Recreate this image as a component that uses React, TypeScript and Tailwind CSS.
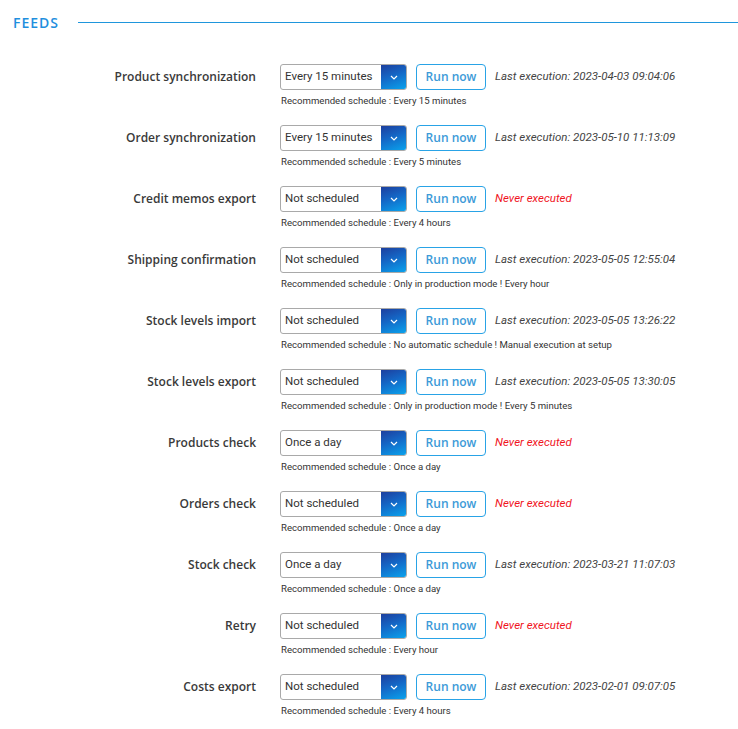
import React from "react";

type Row = { label: string; value: string; rec: string; last: string | null };

const rows: Row[] = [
  { label: "Product synchronization", value: "Every 15 minutes", rec: "Every 15 minutes", last: "2023-04-03 09:04:06" },
  { label: "Order synchronization", value: "Every 15 minutes", rec: "Every 5 minutes", last: "2023-05-10 11:13:09" },
  { label: "Credit memos export", value: "Not scheduled", rec: "Every 4 hours", last: null },
  { label: "Shipping confirmation", value: "Not scheduled", rec: "Only in production mode ! Every hour", last: "2023-05-05 12:55:04" },
  { label: "Stock levels import", value: "Not scheduled", rec: "No automatic schedule ! Manual execution at setup", last: "2023-05-05 13:26:22" },
  { label: "Stock levels export", value: "Not scheduled", rec: "Only in production mode ! Every 5 minutes", last: "2023-05-05 13:30:05" },
  { label: "Products check", value: "Once a day", rec: "Once a day", last: null },
  { label: "Orders check", value: "Not scheduled", rec: "Once a day", last: null },
  { label: "Stock check", value: "Once a day", rec: "Once a day", last: "2023-03-21 11:07:03" },
  { label: "Retry", value: "Not scheduled", rec: "Every hour", last: null },
  { label: "Costs export", value: "Not scheduled", rec: "Every 4 hours", last: "2023-02-01 09:07:05" },
];

function Select({ value }: { value: string }) {
  return (
    <div className="flex h-[26px] w-[127px] overflow-hidden rounded-[3px] border border-[#a9a9a9] bg-white">
      <div className="flex flex-1 items-center pl-[4px] text-[11.5px] text-[#333] [font-family:Roboto,'Liberation_Sans',sans-serif]">
        {value}
      </div>
      <div className="flex w-[25px] items-center justify-center bg-[linear-gradient(160deg,#1d3f9e_0%,#1467c6_45%,#0aa2ec_100%)]">
        <svg width="8" height="5" viewBox="0 0 8 5" fill="none">
          <path d="M1 1 L4 4 L7 1" stroke="white" strokeWidth="1.2" />
        </svg>
      </div>
    </div>
  );
}

export default function App() {
  return (
    <div className="w-[738px] bg-white pb-[14px]">
      <div className="flex h-[44px] items-center">
        <div className="pl-[13px] text-[14px] font-semibold tracking-[1px] text-[#1f8fde] [font-family:'Open_Sans',sans-serif]">
          FEEDS
        </div>
        <div className="ml-[19px] h-px flex-1 bg-[#1f96dc]" />
      </div>
      <div className="flex flex-col gap-[18px] pt-[20px]">
        {rows.map((r) => (
          <div key={r.label} className="flex">
            <div className="flex h-[26px] w-[256px] items-center justify-end text-[12px] font-semibold text-[#3a3a3a] [font-family:'Open_Sans',sans-serif]">
              {r.label}
            </div>
            <div className="ml-[24px] flex flex-col">
              <div className="flex items-center">
                <Select value={r.value} />
                <div className="ml-[9px] flex h-[26px] w-[70px] items-center justify-center rounded-[4px] border border-[#29a3e6] text-[12px] font-semibold text-[#3c9ad8] [font-family:'Open_Sans',sans-serif]">
                  Run now
                </div>
                {r.last ? (
                  <div className="ml-[9px] text-[11.5px] italic text-[#444] [font-family:Roboto,'Liberation_Sans',sans-serif]">
                    Last execution: {r.last}
                  </div>
                ) : (
                  <div className="ml-[9px] text-[11.5px] italic text-[#f0141e] [font-family:Roboto,'Liberation_Sans',sans-serif]">
                    Never executed
                  </div>
                )}
              </div>
              <div className="mt-[5px] pl-[1px] text-[9.6px] leading-[12px] text-[#333] [font-family:Roboto,'Liberation_Sans',sans-serif]">
                Recommended schedule : {r.rec}
              </div>
            </div>
          </div>
        ))}
      </div>
    </div>
  );
}
